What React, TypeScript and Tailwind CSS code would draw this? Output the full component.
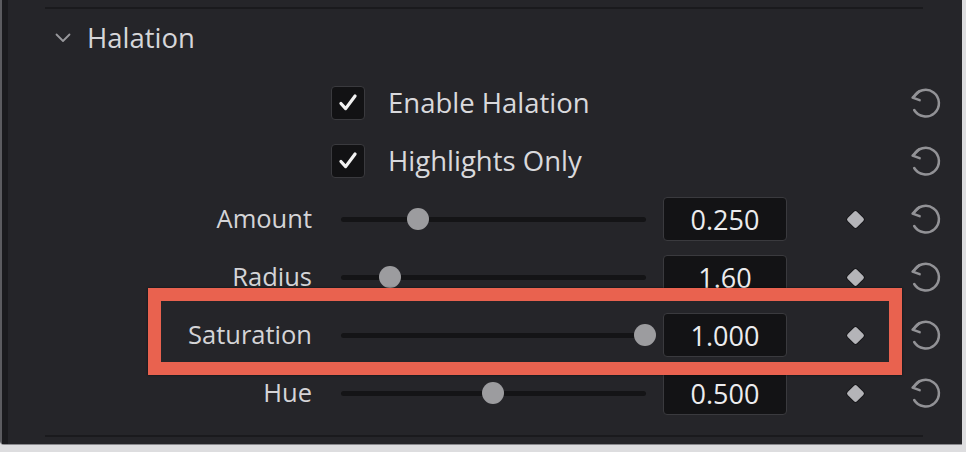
import React from "react";

const font = "font-['Open_Sans','Noto_Sans',sans-serif]";

function ResetIcon() {
  return (
    <svg width="34" height="34" viewBox="0 0 34 34" fill="none" stroke="#929296" strokeWidth="2.5" strokeLinecap="round" strokeLinejoin="round">
      <path d="M4.6 11.5 A13.3 13.3 0 1 1 5.2 24" />
      <polyline points="10,5.5 3.6,11.6 10.6,14.2" />
    </svg>
  );
}

function Diamond() {
  return (
    <div className="w-[20px] h-[20px] flex items-center justify-center">
      <div className="w-[13px] h-[13px] rotate-45 bg-[#b4b4b8] rounded-[2px] shadow-[0_0_0_1px_#18181b]" />
    </div>
  );
}

function Checkbox() {
  return (
    <div className="w-[34px] h-[34px] rounded-[4px] bg-[#121214] border border-[#3a3a3e] flex items-center justify-center">
      <svg width="34" height="34" viewBox="0 0 34 34" fill="none" stroke="#f2f2f2" strokeWidth="3.4" strokeLinecap="round" strokeLinejoin="round">
        <path d="M9.5 17.5 L14.5 23 L24.5 9.5" />
      </svg>
    </div>
  );
}

function CheckRow({ label }: { label: string }) {
  return (
    <div className="h-[58px] flex items-center">
      <div className="ml-[323px]">
        <Checkbox />
      </div>
      <div className="ml-[23px] text-[27.5px] text-[#d9d9dc] leading-none">{label}</div>
      <div className="ml-auto mr-[19px] w-[34px] h-[34px]">
        <ResetIcon />
      </div>
    </div>
  );
}

function SliderRow({ label, value, pos }: { label: string; value: string; pos: number }) {
  return (
    <div className="h-[58px] flex items-center">
      <div className="w-[304px] text-right text-[25.5px] text-[#d4d4d7] leading-none">{label}</div>
      <div className="ml-[29px] w-[305px] h-[22px] relative flex items-center">
        <div className="w-full h-[5px] bg-[#141416] rounded-full" />
        <div
          className="absolute top-0 w-[22px] h-[22px] rounded-full bg-[#9c9c9f]"
          style={{ left: pos - 11 }}
        />
      </div>
      <div className="ml-[17px] w-[124px] h-[44px] rounded-[4px] bg-[#131315] border border-[#3a3a3e] flex items-center justify-center text-[27px] text-[#ececee] leading-none">
        {value}
      </div>
      <div className="ml-[58px]">
        <Diamond />
      </div>
      <div className="ml-[44px] mr-[19px] w-[34px] h-[34px]">
        <ResetIcon />
      </div>
    </div>
  );
}

export default function App() {
  return (
    <div className={`w-[966px] h-[452px] bg-[#dddddf] relative overflow-hidden ${font}`}>
      <div className="w-[962px] h-[444px] bg-[#252529] border-l-2 border-[#5c5c60] rounded-bl-[4px] shadow-[0_1px_0_#8a8a8e]">
        <div className="h-full border-l-[6px] border-[#1b1b1e] flex flex-col">
          <div className="mt-[7px] h-[2px] ml-[37px] w-[878px] bg-[#1a1a1d]" />
          <div className="h-[58px] flex items-center">
            <svg className="ml-[47px]" width="16" height="10" viewBox="0 0 16 10" fill="none" stroke="#98989c" strokeWidth="1.8" strokeLinecap="round" strokeLinejoin="round">
              <polyline points="1.5,1.5 8,8 14.5,1.5" />
            </svg>
            <div className="ml-[16px] text-[27.5px] text-[#d6d6d9] leading-none">Halation</div>
          </div>
          <div className="mt-[7px] flex flex-col">
            <CheckRow label="Enable Halation" />
            <CheckRow label="Highlights Only" />
            <SliderRow label="Amount" value="0.250" pos={77} />
            <SliderRow label="Radius" value="1.60" pos={49} />
            <SliderRow label="Saturation" value="1.000" pos={304} />
            <SliderRow label="Hue" value="0.500" pos={152} />
          </div>
          <div className="mt-[13px] h-[2px] ml-[37px] w-[878px] bg-[#1a1a1d]" />
        </div>
      </div>
      <div className="absolute left-[148px] top-[288px] w-[754px] h-[87px] border-[13px] border-[#e9624f] shadow-[0_0_2px_rgba(0,0,0,0.6)]" />
    </div>
  );
}
